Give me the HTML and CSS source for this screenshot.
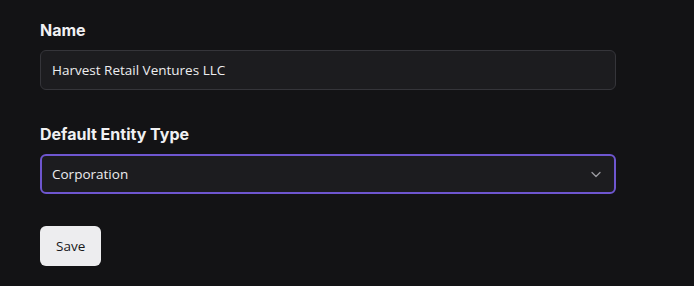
FILE: index.html
```html
<!DOCTYPE html>
<html lang="en">
<head>
    <meta charset="UTF-8">
    <meta name="viewport" content="width=device-width, initial-scale=1.0">
    <title>Settings</title>
    <link rel="stylesheet" href="styles.css">
</head>
<body>
    <form class="form">
        <div class="campo">
            <label for="nome">Name</label>
            <input type="text" id="nome" value="Harvest Retail Ventures LLC">
        </div>

        <div class="campo">
            <label for="tipo">Default Entity Type</label>
            <div class="select-box">
                <select id="tipo">
                    <option>Corporation</option>
                    <option>LLC</option>
                    <option>Partnership</option>
                </select>
                <svg class="seta" width="12" height="12" viewBox="0 0 12 12" fill="none">
                    <path d="M2 4.5 L6 8.5 L10 4.5" stroke="#9a9aa0" stroke-width="1.3" stroke-linecap="round" stroke-linejoin="round"/>
                </svg>
            </div>
        </div>

        <button type="button">Save</button>
    </form>
</body>
</html>
```

FILE: styles.css
```css
body {
    font-family: "Open Sans", "Noto Sans", sans-serif;
    background-color: #131315;
    color: #ededef;
    margin: 0;
    padding: 0;
}

.form {
    width: 576px;
    padding: 20px 40px;
}

.campo {
    margin-bottom: 34px;
}

.campo + .campo {
    margin-bottom: 32px;
}

label {
    display: block;
    font-family: Inter, Lato, sans-serif;
    font-weight: 700;
    font-size: 16px;
    line-height: 20px;
    margin-bottom: 10px;
    color: #f0f0f2;
}

input, select {
    box-sizing: border-box;
    width: 100%;
    height: 40px;
    padding: 0 11px;
    font-family: "Open Sans", "Noto Sans", sans-serif;
    font-size: 13.5px;
    color: #ededef;
    background-color: #1c1c1f;
    border: 1px solid #35353a;
    border-radius: 6px;
    outline: none;
}

.select-box {
    position: relative;
}

select {
    appearance: none;
    border: 2px solid #6e56cf;
    padding: 0 10px;
}

.seta {
    position: absolute;
    right: 14px;
    top: 14px;
    pointer-events: none;
}

button {
    height: 40px;
    padding: 0 16px;
    font-family: "Open Sans", "Noto Sans", sans-serif;
    font-size: 13.5px;
    color: #18181a;
    background-color: #ededef;
    border: none;
    border-radius: 6px;
    cursor: pointer;
}
```
